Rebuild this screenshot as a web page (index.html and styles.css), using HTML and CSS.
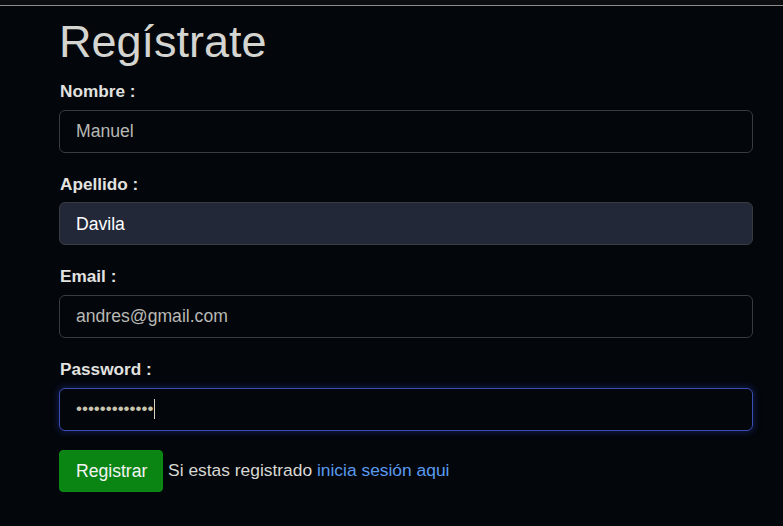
FILE: index.html
```html
<!DOCTYPE html>
<html lang="es">
<head>
<meta charset="utf-8">
<title>Regístrate</title>
<link rel="stylesheet" href="styles.css">
</head>
<body>
<div class="topbar"></div>
<main class="container">
  <h1 class="title">Regístrate</h1>
  <form class="form">
    <div class="group">
      <label class="label">Nombre :</label>
      <div class="field">Manuel</div>
    </div>
    <div class="group">
      <label class="label">Apellido :</label>
      <div class="field field-filled">Davila</div>
    </div>
    <div class="group">
      <label class="label">Email :</label>
      <div class="field">andres@gmail.com</div>
    </div>
    <div class="group">
      <label class="label">Password :</label>
      <div class="field field-focus"><span class="dots">•••••••••••••</span><span class="caret"></span></div>
    </div>
    <div class="actions">
      <button type="button" class="btn">Registrar</button> <span class="note">Si estas registrado <a class="link" href="#">inicia sesión aqui</a></span>
    </div>
  </form>
</main>
</body>
</html>
```
FILE: styles.css
```css
html, body {
  margin: 0;
  padding: 0;
  background: #03060a;
  font-family: "Liberation Sans", Arial, sans-serif;
  font-size: 17px;
  line-height: 1.5;
  color: #dedede;
}
.topbar {
  height: 5px;
  background: #0b0d10;
  border-bottom: 1px solid #8c8c88;
}
.container {
  padding: 0 30px 0 59px;
}
.title {
  margin: 9px 0 0 0;
  font-size: 45px;
  font-weight: 400;
  line-height: 54px;
  color: #d4d4d0;
}
.form {
  margin-top: 10px;
}
.group {
  margin-bottom: 19.2px;
}
.label {
  display: block;
  margin: 0 0 5px 1px;
  font-weight: 700;
  font-size: 17.2px;
  line-height: 25.5px;
  color: #e2e2e0;
}
.field {
  box-sizing: border-box;
  height: 43px;
  padding: 8px 16px;
  border: 1px solid #383b41;
  border-radius: 6px;
  background: #03060a;
  color: #b8b8b4;
  font-size: 17.6px;
  display: flex;
  align-items: center;
}
.field-filled {
  background: #222838;
  color: #ffffff;
}
.field-focus {
  border-color: #3a4eb3;
  box-shadow: 0 0 6px 2px rgba(40, 60, 170, 0.35);
  color: #c8c4b0;
  font-size: 17px;
}
.caret {
  display: inline-block;
  width: 1px;
  height: 20px;
  background: #d8d4c0;
  margin-left: 1px;
}
.actions {
  line-height: 25.5px;
}
.btn {
  font-family: inherit;
  font-size: 17.6px;
  line-height: 1.5;
  height: 42px;
  padding: 0 15px 0 16px;
  border: 1px solid #0b8a14;
  border-radius: 4px;
  background: #0a8514;
  color: #f4f4f4;
  vertical-align: middle;
}
.note {
  color: #d8d8d4;
  font-size: 17.4px;
  vertical-align: middle;
}
.link {
  color: #5a9af0;
  text-decoration: none;
}
```
